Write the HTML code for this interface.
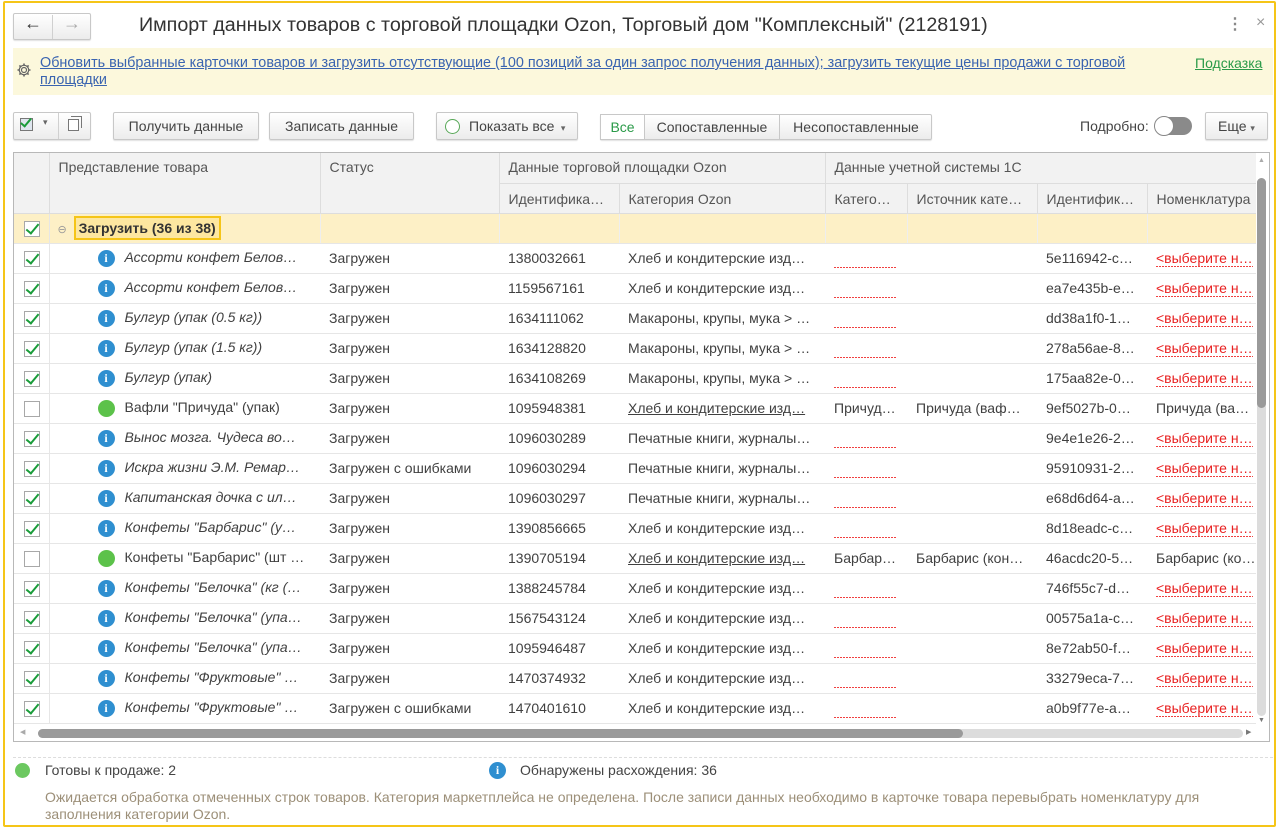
<!DOCTYPE html>
<html><head><meta charset="utf-8">
<style>
*{box-sizing:border-box;margin:0;padding:0}
body{width:1283px;height:829px;background:#fff;font-family:"Liberation Sans",Arial,sans-serif;color:#404040;position:relative;overflow:hidden;font-size:13px}
.a{position:absolute}
.frame{left:3px;top:1px;width:1273px;height:826px;border:2px solid #f5c518;border-radius:2px}
.btn{position:absolute;height:28px;border:1px solid #c8c8c8;border-radius:2px;background:linear-gradient(#fff,#ececec);box-shadow:0 1px 1px rgba(0,0,0,.12);font-size:14px;color:#444;line-height:26px;text-align:center}
.tbl{position:absolute;left:13px;top:152px;width:1257px;height:590px;border:1px solid #b8b8b8;overflow:hidden}
table{border-collapse:collapse;table-layout:fixed;width:1242px;font-size:14px}
td{height:30px;white-space:nowrap;overflow:hidden;padding:0 0 0 9px;border-bottom:1px solid #e6e6e6;color:#404040}
th{font-weight:normal;text-align:left;background:#f2f2f2;color:#555;padding:0 0 0 9px;border-right:1px solid #ddd;border-bottom:1px solid #ddd;white-space:nowrap;overflow:hidden;vertical-align:top;font-size:14px}
.cb{width:16px;height:16px;border:1px solid #a8a8a8;background:#fff;display:inline-block;position:relative;vertical-align:middle;margin-left:1px}
.cb.on::after{content:"";position:absolute;left:4px;top:-1px;width:5px;height:11px;border:solid #1a9c3a;border-width:0 2.5px 2.5px 0;transform:rotate(40deg)}
.ic{display:inline-block;width:17px;height:17px;border-radius:50%;background:#2f8fd0;color:#fff;font:bold 12px/17px "Liberation Serif",serif;text-align:center;vertical-align:middle;margin:0 10px 0 39px}
.gr{display:inline-block;width:17px;height:17px;border-radius:50%;background:#5cc24a;vertical-align:middle;margin:0 10px 0 39px}
.it{font-style:italic}
.rd{display:inline-block;width:63px;height:1px;background:repeating-linear-gradient(90deg,#f04040 0 2px,transparent 2px 3px);vertical-align:middle;margin-top:18px}
.nm{color:#e82020;background:repeating-linear-gradient(90deg,#f04040 0 2px,transparent 2px 3px) left bottom/100% 1px no-repeat;padding-bottom:1px}
.ul{text-decoration:underline}
td.c0{padding-left:9px;border-right:1px solid #e6e6e6}
</style></head><body>
<div class="a frame"></div>

<!-- nav -->
<div class="btn" style="left:13px;top:13px;width:78px;height:27px"></div>
<div class="a" style="left:52px;top:15px;width:1px;height:24px;background:#d0d0d0"></div>
<div class="a" style="left:24px;top:13px;font-size:18px;color:#333">&#8592;</div>
<div class="a" style="left:63px;top:13px;font-size:18px;color:#aaa">&#8594;</div>
<div class="a" style="left:139px;top:14px;font-size:19.7px;color:#333">Импорт данных товаров с торговой площадки Ozon, Торговый дом "Комплексный" (2128191)</div>
<div class="a" style="left:1227px;top:14px;font-size:16px;color:#888;font-weight:bold">&#8942;</div>
<div class="a" style="left:1256px;top:14px;font-size:16px;color:#999">×</div>

<!-- info -->
<div class="a" style="left:13px;top:48px;width:1260px;height:47px;background:#fcf8dc"></div>
<svg class="a" style="left:16px;top:62px" width="16" height="16" viewBox="0 0 16 16"><circle cx="8" cy="8" r="2.5" fill="none" stroke="#666" stroke-width="1.2"/><path d="M8 1.5v2M8 12.5v2M1.5 8h2M12.5 8h2M3.4 3.4l1.4 1.4M11.2 11.2l1.4 1.4M3.4 12.6l1.4-1.4M11.2 4.8l1.4-1.4" stroke="#666" stroke-width="1.6"/><circle cx="8" cy="8" r="4.7" fill="none" stroke="#666" stroke-width="1.2"/></svg>
<div class="a" style="left:40px;top:55px;width:1110px;font-size:14.4px;line-height:17px;color:#3a64b0;text-decoration:underline">Обновить выбранные карточки товаров и загрузить отсутствующие (100 позиций за один запрос получения данных); загрузить текущие цены продажи с торговой площадки</div>
<div class="a" style="left:1195px;top:55px;font-size:14px;color:#2a9a48;text-decoration:underline">Подсказка</div>

<!-- toolbar -->
<div class="btn" style="left:13px;top:112px;width:78px"></div>
<div class="a" style="left:58px;top:113px;width:1px;height:26px;background:#d0d0d0"></div>
<div class="a" style="left:20px;top:118px;width:13px;height:13px;border:1px solid #777;background:#dfe6ef"></div>
<div class="a" style="left:23px;top:116px;width:6px;height:11px;border:solid #1a9c3a;border-width:0 2.5px 2.5px 0;transform:rotate(40deg)"></div>
<div class="a" style="left:43px;top:117px;font-size:9px;color:#666">▾</div>
<div class="a" style="left:68px;top:119px;width:11px;height:12px;border:1px solid #777;background:#fff"></div>
<div class="a" style="left:71px;top:116px;width:11px;height:12px;border:1px solid #777;border-left:none;border-bottom:none"></div>
<div class="btn" style="left:113px;top:112px;width:146px">Получить данные</div>
<div class="btn" style="left:269px;top:112px;width:145px">Записать данные</div>
<div class="btn" style="left:436px;top:112px;width:142px;text-align:left;padding-left:32px">Показать все <span style="font-size:9px;color:#666">&nbsp;▾</span></div>
<div class="a" style="left:445px;top:119px;width:15px;height:15px;border:1px solid #58a858;border-radius:50%;background:#fff"></div>
<div class="btn" style="left:600px;top:114px;width:332px;height:26px"></div>
<div class="a" style="left:600px;top:114px;width:45px;height:26px;background:#fff;border:1px solid #c8c8c8;color:#2a9a48;font-size:14px;line-height:24px;text-align:center">Все</div>
<div class="a" style="left:645px;top:114px;width:135px;height:26px;border-right:1px solid #c8c8c8;font-size:14px;line-height:26px;text-align:center;color:#444">Сопоставленные</div>
<div class="a" style="left:780px;top:114px;width:152px;height:26px;font-size:14px;line-height:26px;text-align:center;color:#444">Несопоставленные</div>
<div class="a" style="left:1080px;top:118px;font-size:14px;color:#444">Подробно:</div>
<div class="a" style="left:1155px;top:117px;width:37px;height:18px;border-radius:9px;background:#8a8a8a"></div>
<div class="a" style="left:1154px;top:116px;width:20px;height:20px;border-radius:50%;background:#fff;border:1px solid #888"></div>
<div class="btn" style="left:1205px;top:112px;width:63px">Еще <span style="font-size:9px;color:#666">▾</span></div>

<!-- table -->
<div class="tbl">
<table>
<colgroup><col style="width:35px"><col style="width:271px"><col style="width:179px"><col style="width:120px"><col style="width:206px"><col style="width:82px"><col style="width:130px"><col style="width:110px"><col style="width:109px"></colgroup>
<tr style="height:30px"><th rowspan="2"></th><th rowspan="2" style="padding-top:6px">Представление товара</th><th rowspan="2" style="padding-top:6px">Статус</th><th colspan="2" style="padding-top:6px;height:30px">Данные торговой площадки Ozon</th><th colspan="4" style="padding-top:6px;border-right:none">Данные учетной системы 1С</th></tr>
<tr style="height:30px"><th style="padding-top:7px">Идентифика…</th><th style="padding-top:7px">Категория Ozon</th><th style="padding-top:7px">Катего…</th><th style="padding-top:7px">Источник кате…</th><th style="padding-top:7px">Идентифик…</th><th style="padding-top:7px;border-right:none">Номенклатура</th></tr>
<tr style="background:#fdf0c6"><td class="c0"><span class="cb on"></span></td><td style="padding-left:8px"><span style="color:#999;font-size:11px">⊖</span> <span style="display:inline-block;border:2px solid #f5c518;background:#fde7a0;font-weight:bold;color:#333;padding:2px 3px;line-height:16px;margin-left:3px">Загрузить (36 из 38)</span></td><td style="border-left:1px solid #eee"></td><td style="border-left:1px solid #eee"></td><td style="border-left:1px solid #eee"></td><td style="border-left:1px solid #eee"></td><td style="border-left:1px solid #eee"></td><td style="border-left:1px solid #eee"></td><td style="border-left:1px solid #eee"></td></tr>
<tr><td class="c0"><span class="cb on"></span></td><td><span class="ic">i</span><span class="it">Ассорти конфет Белов…</span></td><td>Загружен</td><td>1380032661</td><td>Хлеб и кондитерские изд…</td><td><span class="rd"></span></td><td></td><td>5e116942-c…</td><td><span class="nm">&lt;выберите н…</span></td></tr>
<tr><td class="c0"><span class="cb on"></span></td><td><span class="ic">i</span><span class="it">Ассорти конфет Белов…</span></td><td>Загружен</td><td>1159567161</td><td>Хлеб и кондитерские изд…</td><td><span class="rd"></span></td><td></td><td>ea7e435b-e…</td><td><span class="nm">&lt;выберите н…</span></td></tr>
<tr><td class="c0"><span class="cb on"></span></td><td><span class="ic">i</span><span class="it">Булгур (упак (0.5 кг))</span></td><td>Загружен</td><td>1634111062</td><td>Макароны, крупы, мука &gt; …</td><td><span class="rd"></span></td><td></td><td>dd38a1f0-1…</td><td><span class="nm">&lt;выберите н…</span></td></tr>
<tr><td class="c0"><span class="cb on"></span></td><td><span class="ic">i</span><span class="it">Булгур (упак (1.5 кг))</span></td><td>Загружен</td><td>1634128820</td><td>Макароны, крупы, мука &gt; …</td><td><span class="rd"></span></td><td></td><td>278a56ae-8…</td><td><span class="nm">&lt;выберите н…</span></td></tr>
<tr><td class="c0"><span class="cb on"></span></td><td><span class="ic">i</span><span class="it">Булгур (упак)</span></td><td>Загружен</td><td>1634108269</td><td>Макароны, крупы, мука &gt; …</td><td><span class="rd"></span></td><td></td><td>175aa82e-0…</td><td><span class="nm">&lt;выберите н…</span></td></tr>
<tr><td class="c0"><span class="cb"></span></td><td><span class="gr"></span>Вафли "Причуда" (упак)</td><td>Загружен</td><td>1095948381</td><td class="ul">Хлеб и кондитерские изд…</td><td>Причуд…</td><td>Причуда (ваф…</td><td>9ef5027b-0…</td><td>Причуда (ва…</td></tr>
<tr><td class="c0"><span class="cb on"></span></td><td><span class="ic">i</span><span class="it">Вынос мозга. Чудеса во…</span></td><td>Загружен</td><td>1096030289</td><td>Печатные книги, журналы…</td><td><span class="rd"></span></td><td></td><td>9e4e1e26-2…</td><td><span class="nm">&lt;выберите н…</span></td></tr>
<tr><td class="c0"><span class="cb on"></span></td><td><span class="ic">i</span><span class="it">Искра жизни Э.М. Ремар…</span></td><td>Загружен с ошибками</td><td>1096030294</td><td>Печатные книги, журналы…</td><td><span class="rd"></span></td><td></td><td>95910931-2…</td><td><span class="nm">&lt;выберите н…</span></td></tr>
<tr><td class="c0"><span class="cb on"></span></td><td><span class="ic">i</span><span class="it">Капитанская дочка с ил…</span></td><td>Загружен</td><td>1096030297</td><td>Печатные книги, журналы…</td><td><span class="rd"></span></td><td></td><td>e68d6d64-a…</td><td><span class="nm">&lt;выберите н…</span></td></tr>
<tr><td class="c0"><span class="cb on"></span></td><td><span class="ic">i</span><span class="it">Конфеты "Барбарис" (у…</span></td><td>Загружен</td><td>1390856665</td><td>Хлеб и кондитерские изд…</td><td><span class="rd"></span></td><td></td><td>8d18eadc-c…</td><td><span class="nm">&lt;выберите н…</span></td></tr>
<tr><td class="c0"><span class="cb"></span></td><td><span class="gr"></span>Конфеты "Барбарис" (шт …</td><td>Загружен</td><td>1390705194</td><td class="ul">Хлеб и кондитерские изд…</td><td>Барбар…</td><td>Барбарис (кон…</td><td>46acdc20-5…</td><td>Барбарис (ко…</td></tr>
<tr><td class="c0"><span class="cb on"></span></td><td><span class="ic">i</span><span class="it">Конфеты "Белочка" (кг (…</span></td><td>Загружен</td><td>1388245784</td><td>Хлеб и кондитерские изд…</td><td><span class="rd"></span></td><td></td><td>746f55c7-d…</td><td><span class="nm">&lt;выберите н…</span></td></tr>
<tr><td class="c0"><span class="cb on"></span></td><td><span class="ic">i</span><span class="it">Конфеты "Белочка" (упа…</span></td><td>Загружен</td><td>1567543124</td><td>Хлеб и кондитерские изд…</td><td><span class="rd"></span></td><td></td><td>00575a1a-c…</td><td><span class="nm">&lt;выберите н…</span></td></tr>
<tr><td class="c0"><span class="cb on"></span></td><td><span class="ic">i</span><span class="it">Конфеты "Белочка" (упа…</span></td><td>Загружен</td><td>1095946487</td><td>Хлеб и кондитерские изд…</td><td><span class="rd"></span></td><td></td><td>8e72ab50-f…</td><td><span class="nm">&lt;выберите н…</span></td></tr>
<tr><td class="c0"><span class="cb on"></span></td><td><span class="ic">i</span><span class="it">Конфеты "Фруктовые" …</span></td><td>Загружен</td><td>1470374932</td><td>Хлеб и кондитерские изд…</td><td><span class="rd"></span></td><td></td><td>33279eca-7…</td><td><span class="nm">&lt;выберите н…</span></td></tr>
<tr><td class="c0"><span class="cb on"></span></td><td><span class="ic">i</span><span class="it">Конфеты "Фруктовые" …</span></td><td>Загружен с ошибками</td><td>1470401610</td><td>Хлеб и кондитерские изд…</td><td><span class="rd"></span></td><td></td><td>a0b9f77e-a…</td><td><span class="nm">&lt;выберите н…</span></td></tr>
</table>
<!-- vscroll -->
<div class="a" style="left:1243px;top:25px;width:9px;height:538px;background:#dcdcdc;border-radius:5px"></div>
<div class="a" style="left:1243px;top:25px;width:9px;height:230px;background:#9a9a9a;border-radius:5px"></div>
<div class="a" style="left:1244px;top:4px;font-size:7px;color:#aaa">▲</div>
<div class="a" style="left:1244px;top:564px;font-size:7px;color:#777">▼</div>
<!-- hscroll -->
<div class="a" style="left:0;top:573px;width:1242px;height:16px;background:#fff"></div>
<div class="a" style="left:24px;top:576px;width:1205px;height:9px;background:#dcdcdc;border-radius:5px"></div>
<div class="a" style="left:24px;top:576px;width:925px;height:9px;background:#9a9a9a;border-radius:5px"></div>
<div class="a" style="left:6px;top:575px;font-size:7px;color:#aaa">◀</div>
<div class="a" style="left:1232px;top:575px;font-size:7px;color:#777">▶</div>
</div>

<!-- footer -->
<div class="a" style="left:13px;top:757px;width:1260px;border-top:1px dashed #ddd"></div>
<div class="a" style="left:15px;top:763px;width:15px;height:15px;border-radius:50%;background:#6cc860"></div>
<div class="a" style="left:45px;top:762px;font-size:14px;color:#444">Готовы к продаже: 2</div>
<div class="a" style="left:489px;top:762px;width:17px;height:17px;border-radius:50%;background:#2f8fd0;color:#fff;font:bold 12px/17px 'Liberation Serif',serif;text-align:center">i</div>
<div class="a" style="left:520px;top:762px;font-size:14px;color:#444">Обнаружены расхождения: 36</div>
<div class="a" style="left:45px;top:789px;width:1200px;font-size:14px;line-height:17px;color:#9c8f78">Ожидается обработка отмеченных строк товаров. Категория маркетплейса не определена. После записи данных необходимо в карточке товара перевыбрать номенклатуру для заполнения категории Ozon.</div>
</body></html>
